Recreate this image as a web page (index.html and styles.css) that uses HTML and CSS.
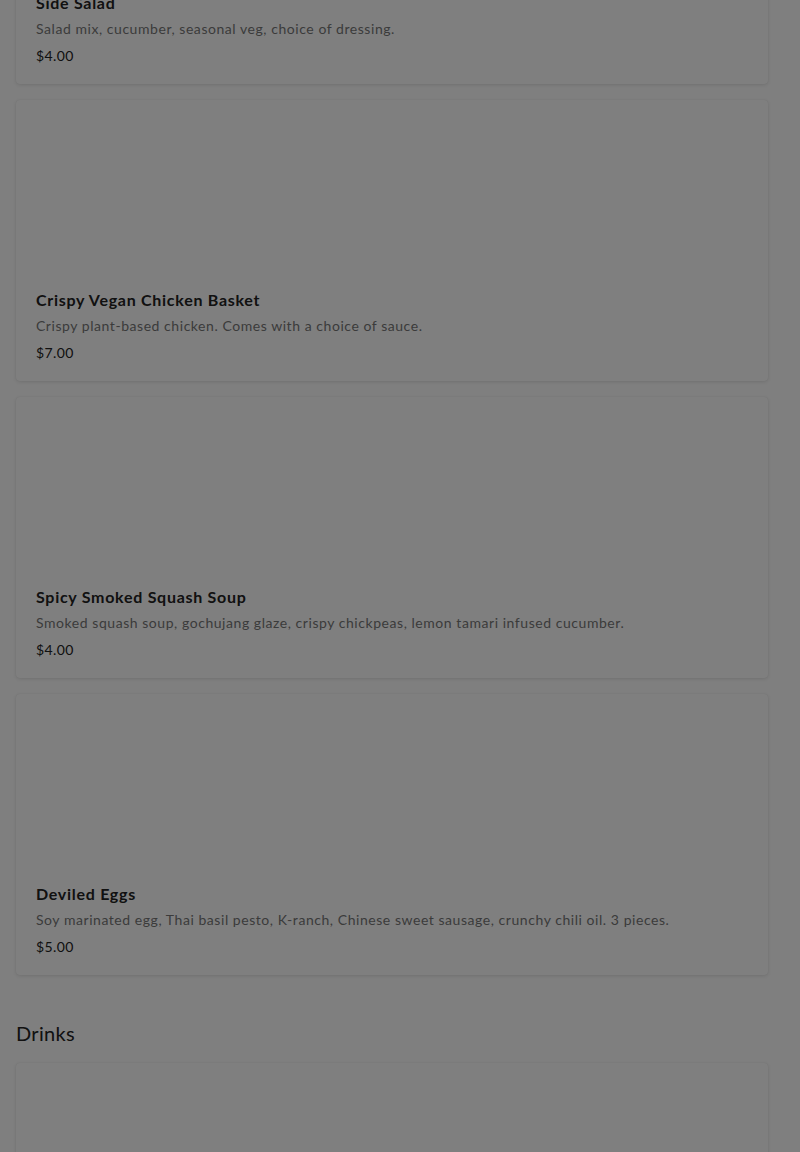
FILE: index.html
```html
<!DOCTYPE html>
<html>
<head>
<meta charset="utf-8">
<link rel="stylesheet" href="styles.css">
</head>
<body>
<main class="menu">
  <section class="section">
    <div class="items">
      <article class="card">
        <div class="card-img"></div>
        <div class="card-body">
          <h3 class="item-name">Side Salad</h3>
          <p class="item-desc">Salad mix, cucumber, seasonal veg, choice of dressing.</p>
          <p class="item-price">$4.00</p>
        </div>
      </article>
      <article class="card">
        <div class="card-img"></div>
        <div class="card-body">
          <h3 class="item-name">Crispy Vegan Chicken Basket</h3>
          <p class="item-desc">Crispy plant-based chicken. Comes with a choice of sauce.</p>
          <p class="item-price">$7.00</p>
        </div>
      </article>
      <article class="card">
        <div class="card-img"></div>
        <div class="card-body">
          <h3 class="item-name">Spicy Smoked Squash Soup</h3>
          <p class="item-desc">Smoked squash soup, gochujang glaze, crispy chickpeas, lemon tamari infused cucumber.</p>
          <p class="item-price">$4.00</p>
        </div>
      </article>
      <article class="card">
        <div class="card-img"></div>
        <div class="card-body">
          <h3 class="item-name">Deviled Eggs</h3>
          <p class="item-desc">Soy marinated egg, Thai basil pesto, K-ranch, Chinese sweet sausage, crunchy chili oil. 3 pieces.</p>
          <p class="item-price">$5.00</p>
        </div>
      </article>
    </div>
  </section>
  <section class="section">
    <h2 class="section-title">Drinks</h2>
    <div class="items">
      <article class="card">
        <div class="card-img"></div>
        <div class="card-body">
          <h3 class="item-name">&nbsp;</h3>
        </div>
      </article>
    </div>
  </section>
</main>
<div class="backdrop"></div>
</body>
</html>
```
FILE: styles.css
```css
html, body {
  margin: 0;
  padding: 0;
  background: #ffffff;
  overflow: hidden;
}
body {
  font-family: "Lato", "Liberation Sans", sans-serif;
  color: #222;
}
.menu {
  padding: 0 32px 0 16px;
  margin-top: -197px;
}
.items {
  display: flex;
  flex-direction: column;
  gap: 16px;
}
.card {
  background: #fff;
  border-radius: 4px;
  box-shadow: 0 1px 4px rgba(0, 0, 0, 0.12), 0 0 1px rgba(0, 0, 0, 0.1);
  overflow: hidden;
}
.card-img {
  height: 168px;
}
.card-body {
  padding: 20px 20px 18px;
}
.item-name {
  margin: 0;
  font-size: 16px;
  line-height: 24px;
  font-weight: 700;
  letter-spacing: 0.72px;
  color: #222;
}
.item-desc {
  margin: 4px 0 0;
  font-size: 14px;
  line-height: 20px;
  letter-spacing: 0.55px;
  color: #777;
}
.item-price {
  margin: 7px 0 0;
  font-size: 14px;
  line-height: 20px;
  letter-spacing: 0.4px;
  color: #222;
}
.section-title {
  margin: 44px 0 16px;
  font-size: 20px;
  line-height: 28px;
  font-weight: 400;
  letter-spacing: 0.3px;
  color: #222;
}
.backdrop {
  position: fixed;
  inset: 0;
  background: rgba(0, 0, 0, 0.5);
}
```
